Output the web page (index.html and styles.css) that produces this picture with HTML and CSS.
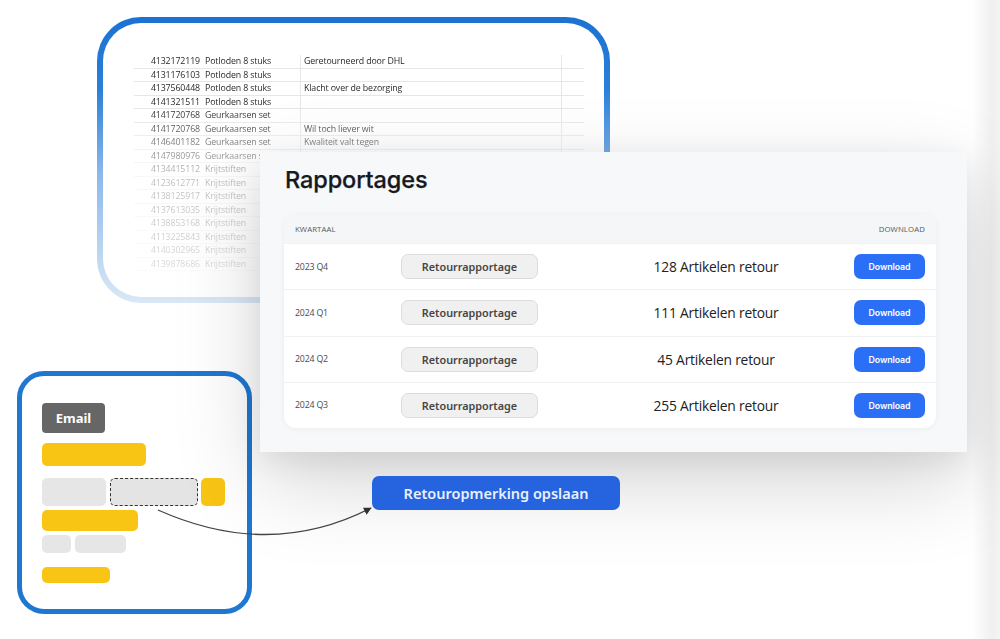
FILE: index.html
```html
<!DOCTYPE html>
<html lang="nl">
<head>
<meta charset="utf-8">
<title>Rapportages</title>
<link rel="stylesheet" href="styles.css">
</head>
<body>
<div class="stage">

  <div class="sheet-card">
    <div class="sheet">
      <div class="srow"><span class="num">4132172119</span><span class="prod">Potloden 8 stuks</span><span class="note">Geretourneerd door DHL</span><span class="end"></span></div>
      <div class="srow"><span class="num">4131176103</span><span class="prod">Potloden 8 stuks</span><span class="note"></span><span class="end"></span></div>
      <div class="srow"><span class="num">4137560448</span><span class="prod">Potloden 8 stuks</span><span class="note">Klacht over de bezorging</span><span class="end"></span></div>
      <div class="srow"><span class="num">4141321511</span><span class="prod">Potloden 8 stuks</span><span class="note"></span><span class="end"></span></div>
      <div class="srow"><span class="num">4141720768</span><span class="prod">Geurkaarsen set</span><span class="note"></span><span class="end"></span></div>
      <div class="srow"><span class="num">4141720768</span><span class="prod">Geurkaarsen set</span><span class="note">Wil toch liever wit</span><span class="end"></span></div>
      <div class="srow"><span class="num">4146401182</span><span class="prod">Geurkaarsen set</span><span class="note">Kwaliteit valt tegen</span><span class="end"></span></div>
      <div class="srow"><span class="num">4147980976</span><span class="prod">Geurkaarsen set</span><span class="note"></span><span class="end"></span></div>
      <div class="srow"><span class="num">4134415112</span><span class="prod">Krijtstiften</span><span class="note"></span><span class="end"></span></div>
      <div class="srow"><span class="num">4123612771</span><span class="prod">Krijtstiften</span><span class="note"></span><span class="end"></span></div>
      <div class="srow"><span class="num">4138125917</span><span class="prod">Krijtstiften</span><span class="note"></span><span class="end"></span></div>
      <div class="srow"><span class="num">4137613035</span><span class="prod">Krijtstiften</span><span class="note"></span><span class="end"></span></div>
      <div class="srow"><span class="num">4138853168</span><span class="prod">Krijtstiften</span><span class="note"></span><span class="end"></span></div>
      <div class="srow"><span class="num">4113225843</span><span class="prod">Krijtstiften</span><span class="note"></span><span class="end"></span></div>
      <div class="srow"><span class="num">4140302965</span><span class="prod">Krijtstiften</span><span class="note"></span><span class="end"></span></div>
      <div class="srow"><span class="num">4139878686</span><span class="prod">Krijtstiften</span><span class="note"></span><span class="end"></span></div>
    </div>
  </div>

  <div class="email-card">
    <div class="email-label">Email</div>
    <div class="blk y b1"></div>
    <div class="line l1">
      <div class="blk g b2"></div>
      <div class="blk g dashed b3"></div>
      <div class="blk y b4"></div>
    </div>
    <div class="blk y b5"></div>
    <div class="line l2">
      <div class="blk g b6"></div>
      <div class="blk g b7"></div>
    </div>
    <div class="blk y b8"></div>
  </div>

  <svg class="arrow" width="230" height="50" viewBox="0 0 230 50">
    <defs>
      <marker id="ah" viewBox="0 0 10 10" refX="9" refY="5" markerWidth="6" markerHeight="6" orient="auto">
        <path d="M0 0L10 5L0 10z" fill="#333"/>
      </marker>
    </defs>
    <path d="M8 15 Q120 65 221 13" fill="none" stroke="#444" stroke-width="1.3" marker-end="url(#ah)"/>
  </svg>

  <div class="panel">
    <h1 class="title">Rapportages</h1>
    <div class="table">
      <div class="thead">
        <span>Kwartaal</span>
        <span>Download</span>
      </div>
      <div class="trow">
        <span class="q">2023 Q4</span>
        <span class="rbtn">Retourrapportage</span>
        <span class="count">128 Artikelen retour</span>
        <span class="dbtn">Download</span>
      </div>
      <div class="trow">
        <span class="q">2024 Q1</span>
        <span class="rbtn">Retourrapportage</span>
        <span class="count">111 Artikelen retour</span>
        <span class="dbtn">Download</span>
      </div>
      <div class="trow">
        <span class="q">2024 Q2</span>
        <span class="rbtn">Retourrapportage</span>
        <span class="count">45 Artikelen retour</span>
        <span class="dbtn">Download</span>
      </div>
      <div class="trow">
        <span class="q">2024 Q3</span>
        <span class="rbtn">Retourrapportage</span>
        <span class="count">255 Artikelen retour</span>
        <span class="dbtn">Download</span>
      </div>
    </div>
  </div>

  <div class="save-btn">Retouropmerking opslaan</div>

</div>
</body>
</html>
```

FILE: styles.css
```css
* { box-sizing: border-box; }

html, body {
  margin: 0;
  padding: 0;
}

body {
  width: 1000px;
  height: 639px;
  overflow: hidden;
  font-family: "Open Sans", "Noto Sans", sans-serif;
}

.stage {
  position: relative;
  width: 1000px;
  height: 639px;
  background: linear-gradient(to right, #ffffff 0, #ffffff 97.2%, #f0f0f0 99.2%, #f4f4f4 100%);
  overflow: hidden;
}

/* ---------- spreadsheet card ---------- */
.sheet-card {
  position: absolute;
  left: 97px;
  top: 17px;
  width: 513px;
  height: 286px;
  border: 6px solid transparent;
  border-radius: 44px;
  background:
    linear-gradient(#ffffff, #ffffff) padding-box,
    linear-gradient(to bottom, #1b72d2 0%, #2a7fd9 25%, #8cb9ea 55%, #dae8f7 100%) border-box;
  padding: 32px 0 0 31px;
}

.sheet {
  width: 450px;
  display: flex;
  flex-direction: column;
  -webkit-mask-image: linear-gradient(to bottom, #000 0%, #000 24%, rgba(0,0,0,.6) 40%, rgba(0,0,0,.32) 55%, rgba(0,0,0,.17) 100%);
  mask-image: linear-gradient(to bottom, #000 0%, #000 24%, rgba(0,0,0,.6) 40%, rgba(0,0,0,.32) 55%, rgba(0,0,0,.17) 100%);
}

.srow {
  display: grid;
  grid-template-columns: 68px 98px 261px 23px;
  height: 13.5px;
  border-bottom: 1px solid #e6e6e6;
  font-size: 8.8px;
  line-height: 12.5px;
  color: #2a2a2a;
  letter-spacing: -0.12px;
}

.srow .num { text-align: right; padding-right: 2px; }
.srow .prod { padding-left: 3px; white-space: nowrap; overflow: hidden; }
.srow .note { padding-left: 3px; border-left: 1px solid #e6e6e6; }
.srow .end { border-left: 1px solid #e6e6e6; }

/* ---------- email card ---------- */
.email-card {
  position: absolute;
  left: 17px;
  top: 371px;
  width: 235px;
  height: 243px;
  border: 5px solid #1f77d0;
  border-radius: 27px;
  background: #ffffff;
  padding: 27px 0 0 20px;
  display: flex;
  flex-direction: column;
  align-items: flex-start;
}

.email-label {
  width: 63px;
  height: 30px;
  background: #666666;
  border-radius: 4px;
  color: #ffffff;
  font-family: "Noto Sans", sans-serif;
  font-weight: 700;
  font-size: 13px;
  display: flex;
  align-items: center;
  justify-content: center;
}

.blk { border-radius: 5px; }
.blk.y { background: #f9c514; }
.blk.g { background: #e6e6e6; }
.blk.dashed { border: 1.2px dashed #333; background: #e4e4e4; }

.line { display: flex; gap: 4px; }
.l1 { margin-top: 12px; }
.l2 { margin-top: 4px; }

.b1 { width: 104px; height: 23px; margin-top: 10px; }
.b2 { width: 64px; height: 28px; }
.b3 { width: 88px; height: 28px; }
.b4 { width: 24px; height: 28px; margin-left: -1px; }
.b5 { width: 96px; height: 21px; margin-top: 4px; }
.b6 { width: 29px; height: 18px; }
.b7 { width: 51px; height: 18px; }
.b8 { width: 68px; height: 16px; margin-top: 14px; }

.arrow {
  position: absolute;
  left: 150px;
  top: 495px;
  overflow: visible;
}

/* ---------- panel ---------- */
.panel {
  position: absolute;
  left: 260px;
  top: 152px;
  width: 707px;
  height: 300px;
  background: #f7f8fa;
  padding: 13px 31px 0 24px;
  box-shadow: 0 30px 80px rgba(0,0,0,0.17), 0 8px 30px rgba(0,0,0,0.07);
}

.title {
  margin: 0 0 20px 1px;
  font-family: "Inter", sans-serif;
  font-weight: 500;
  font-size: 23.5px;
  line-height: 29px;
  color: #16191e;
  letter-spacing: -0.1px;
  -webkit-text-stroke: 0.25px #16191e;
}

.table {
  background: #ffffff;
  border-radius: 12px;
  overflow: hidden;
  box-shadow: 0 1px 6px rgba(0,0,0,0.05);
}

.thead {
  height: 29px;
  background: #f5f6f8;
  display: flex;
  justify-content: space-between;
  align-items: center;
  padding: 0 11px;
  font-size: 7.8px;
  text-transform: uppercase;
  color: #555a61;
  letter-spacing: 0.1px;
}

.trow {
  height: 46.25px;
  display: grid;
  grid-template-columns: 106px 137px 1fr 71px;
  align-items: center;
  padding: 0 11px;
  border-top: 1px solid #f1f2f4;
}

.trow:first-of-type { border-top: none; }

.q {
  font-size: 8.8px;
  color: #4a4a4a;
  letter-spacing: -0.2px;
}

.rbtn {
  height: 25px;
  border: 1px solid #dcdcdc;
  border-radius: 7px;
  background: #f0f0f0;
  display: flex;
  align-items: center;
  justify-content: center;
  font-family: "Noto Sans", sans-serif;
  font-weight: 600;
  font-size: 10.8px;
  color: #454545;
}

.count {
  padding-left: 40px;
  text-align: center;
  font-size: 13.8px;
  font-weight: 500;
  color: #222222;
  letter-spacing: -0.2px;
}

.dbtn {
  height: 25px;
  border-radius: 7px;
  background: #2b6ff6;
  color: #ffffff;
  display: flex;
  align-items: center;
  justify-content: center;
  font-family: "Inter", sans-serif;
  font-weight: 600;
  font-size: 8.8px;
  letter-spacing: -0.1px;
}

/* ---------- save button ---------- */
.save-btn {
  position: absolute;
  left: 372px;
  top: 476px;
  width: 248px;
  height: 34px;
  background: #2563df;
  border-radius: 7px;
  color: #eaf0fd;
  font-family: "Noto Sans", sans-serif;
  font-weight: 600;
  font-size: 14.5px;
  display: flex;
  align-items: center;
  justify-content: center;
}
```
